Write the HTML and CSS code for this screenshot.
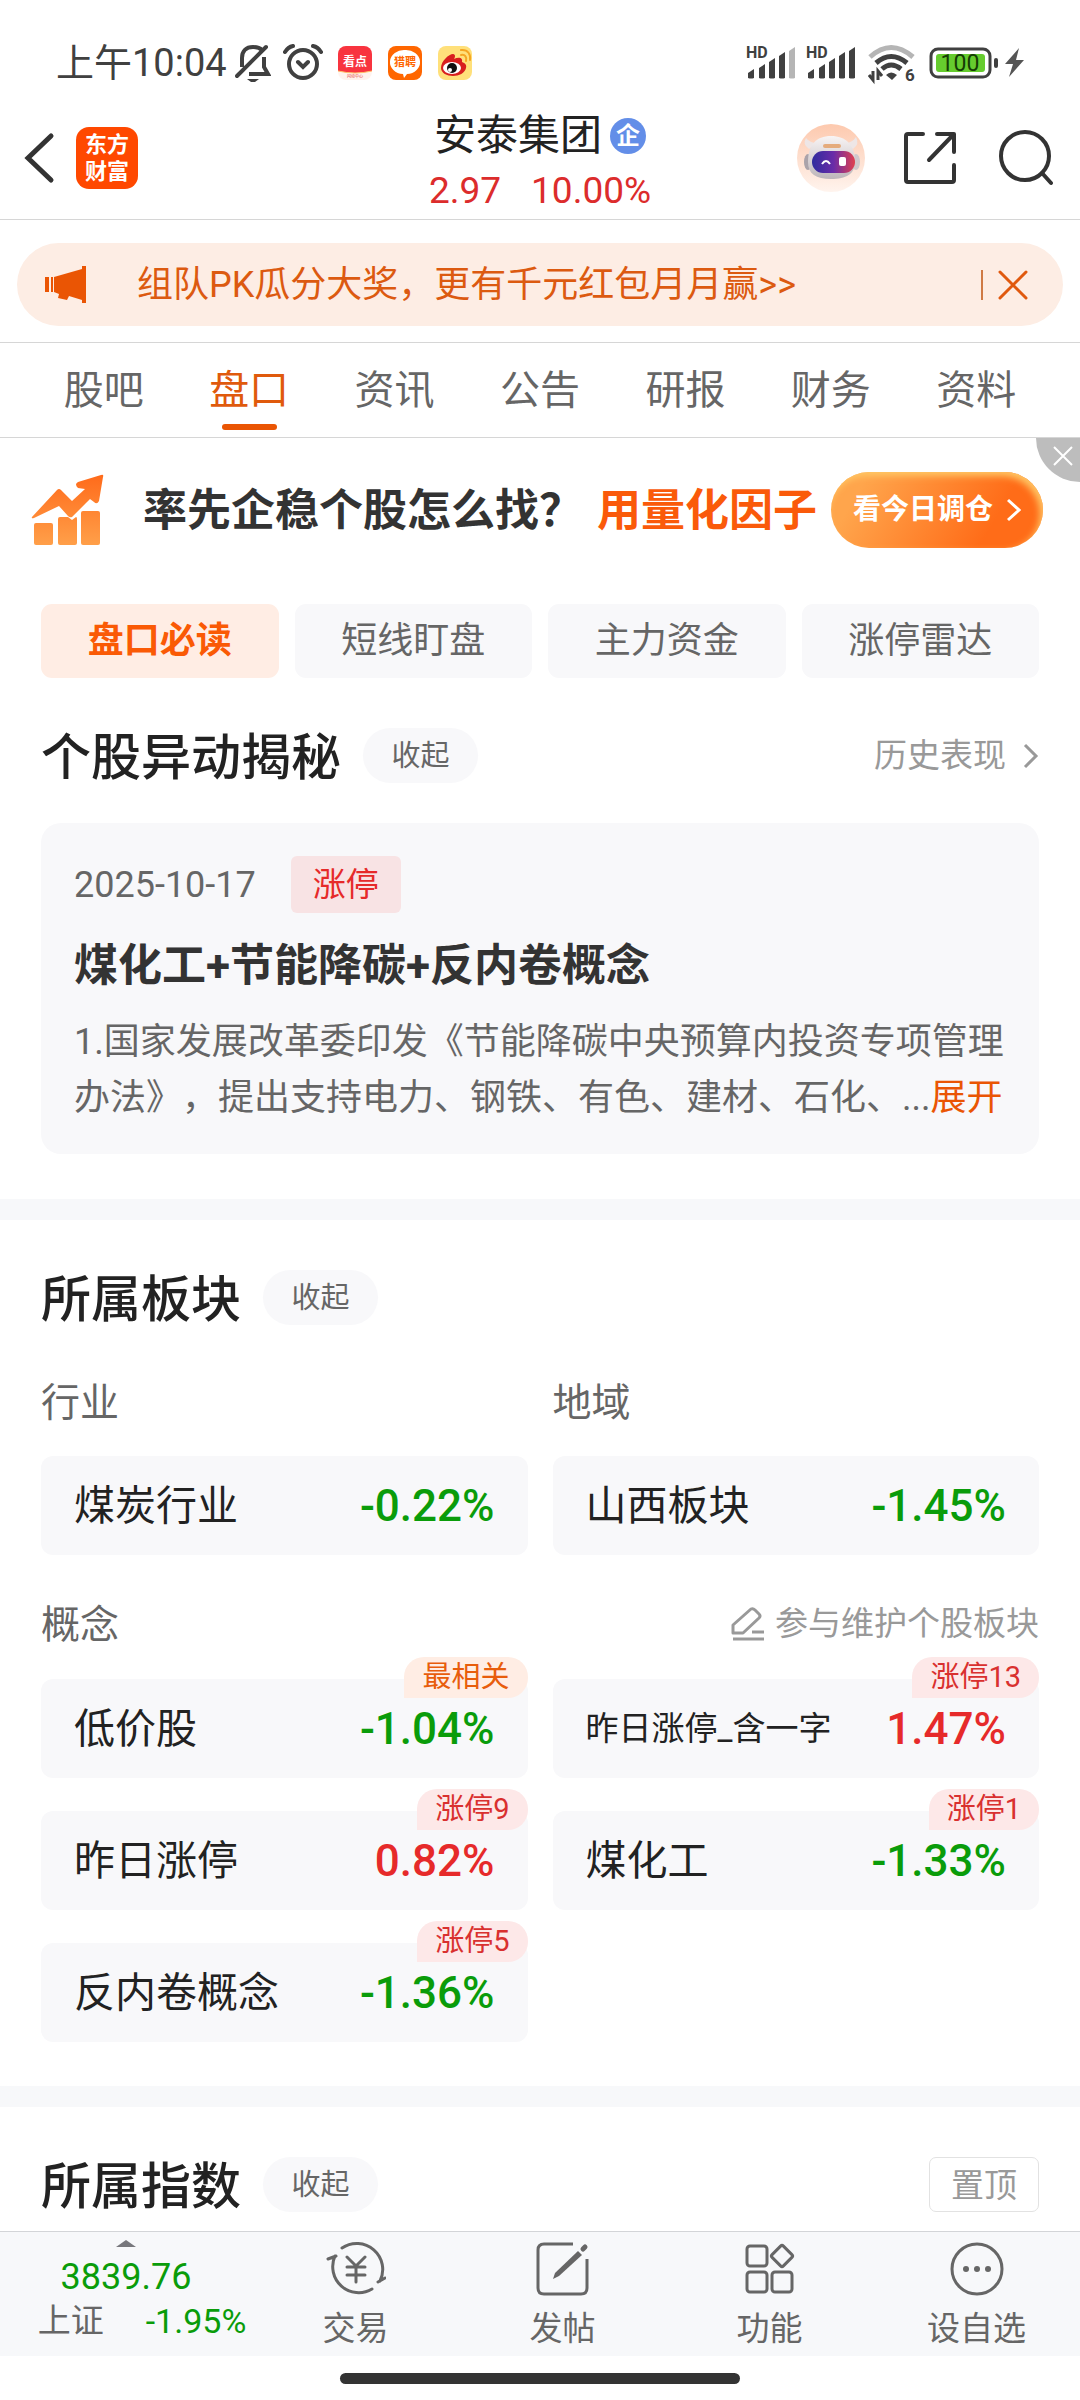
FILE: index.html
```
<!DOCTYPE html>
<html lang="zh-CN">
<head>
    <meta charset="utf-8">
    <meta name="viewport" content="width=device-width">
    <title>安泰集团 - 盘口</title>
<link rel="stylesheet" href="styles.css">
</head>
<body>
<div class="status">
    <span class="time">上午10:04</span>
    <svg class="bell" width="36" height="38" viewBox="0 0 36 38" fill="none" stroke="#404040" stroke-width="4">
        <path d="M7 23V14C7 7 11 3 18 3c4 0 7 1 9 3M29 13v10l4 7H14"/>
        <path d="M2 32L31 3" stroke-linecap="round"/>
        <path d="M12 35h12l-4 3h-4z" fill="#404040" stroke="none"/>
    </svg>
    <svg class="alarm" width="40" height="38" viewBox="0 0 40 38" fill="none" stroke="#404040" stroke-width="4" stroke-linecap="round">
        <circle cx="20" cy="20" r="14"/>
        <path d="M2 8q3-5 8-6M38 8q-3-5-8-6M15 18l5 5 5-5"/>
    </svg>
    <svg class="app" width="34" height="34" viewBox="0 0 34 34">
        <rect width="34" height="34" rx="8" fill="#fff3ee"/>
        <path d="M0 25V8a8 8 0 0 1 8-8h18a8 8 0 0 1 8 8v17q-17 4-34 0z" fill="#f8343f"/>
        <path d="M0 25q17 4 34 0" fill="none" stroke="#ffc46b" stroke-width="1"/>
        <text x="17" y="20" font-size="12" font-weight="700" text-anchor="middle" fill="#fff">看点</text>
        <text x="17" y="32" font-size="4" text-anchor="middle" fill="#e53935">闪动中心</text>
    </svg>
    <svg class="app" width="34" height="34" viewBox="0 0 34 34">
        <rect width="34" height="34" rx="8" fill="#ff6600"/>
        <path d="M17 4a14 12 0 0 1 2 24l-3 4-1-4A14 12 0 0 1 17 4z" fill="#fff"/>
        <text x="17" y="20" font-size="11" font-weight="700" text-anchor="middle" fill="#ff6600">猎聘</text>
    </svg>
    <svg class="app" width="34" height="34" viewBox="0 0 34 34">
        <rect width="34" height="34" rx="8" fill="#ffe07a"/>
        <path d="M3 22c0-7 8-14 12-14 3 0 2 4 1 5 4-2 9-2 8 3 3 1 5 3 4 6-1 5-7 8-13 8S3 27 3 22z" fill="#d81e1e"/>
        <ellipse cx="14" cy="22" rx="9" ry="6" fill="#fff"/>
        <circle cx="14" cy="22" r="5" fill="#111"/>
        <circle cx="12" cy="24" r="2" fill="#fff"/>
        <path d="M23 9c4-1 6 2 5 6M23 4c7-1 10 5 9 10" fill="none" stroke="#f5a623" stroke-width="2" stroke-linecap="round"/>
    </svg>
    <span class="grow"></span>
    <svg width="52" height="44" viewBox="0 -4 52 44" fill="#404040">
        <text x="0" y="13" font-size="16" font-weight="700">HD</text>
        <path d="M2 33v-5l6-4v9q-3 1-6 0zM13 33V23l6-4v14q-3 1-6 0zM23 33V17l6-4v20q-3 1-6 0zM33 33V11l6-4v26q-3 1-6 0z"/>
        <path d="M43 33V6l6-4v31q-3 1-6 0z" fill="#b5b5b5"/>
    </svg>
    <svg class="sig" width="52" height="44" viewBox="0 -4 52 44" fill="#404040">
        <text x="0" y="13" font-size="16" font-weight="700">HD</text>
        <path d="M2 33v-5l6-4v9q-3 1-6 0zM13 33V23l6-4v14q-3 1-6 0zM23 33V17l6-4v20q-3 1-6 0zM33 33V11l6-4v26q-3 1-6 0zM43 33V6l6-4v31q-3 1-6 0z"/>
    </svg>
    <svg class="wifi" width="48" height="46" viewBox="0 -4 48 46" fill="none" stroke="#404040" stroke-width="5">
        <path d="M2 13Q23-6 45 13" stroke="#b5b5b5"/>
        <path d="M8 19q15-13 31 0M14 25q9-8 19 0"/>
        <path d="M18 31q5-5 11 0l-5 5z" fill="#404040" stroke="none"/>
        <path d="M5 27v9l-4-5M10 36v-9l4 5" stroke-width="3"/>
        <text x="37" y="37" font-size="17" font-weight="700" fill="#404040" stroke="none">6</text>
    </svg>
    <svg class="batt" width="96" height="32" viewBox="0 0 96 32">
        <rect x="2" y="2" width="59" height="28" rx="7" fill="#fff" stroke="#404040" stroke-width="3"/>
        <rect x="7" y="7" width="49" height="18" rx="3" fill="#66cc2e"/>
        <rect x="65" y="11" width="4" height="10" rx="2" fill="#404040"/>
        <text x="31" y="24" font-size="23" text-anchor="middle" fill="#153d05">100</text>
        <path d="M90 1L76 17h8l-4 13 15-17h-8z" fill="#555"/>
    </svg>
</div>

<header class="header">
    <a href="#" class="back" aria-label="返回">
        <svg width="32" height="54" viewBox="0 0 32 54" fill="none" stroke="#333" stroke-width="5" stroke-linecap="round"><path d="M27 5L4 27l23 22"/></svg>
    </a>
    <a href="#" class="logo">东方<br>财富</a>
    <div class="stock">
        <h1>安泰集团<span class="qi">企</span></h1>
        <p class="price"><span>2.97</span><span>10.00%</span></p>
    </div>
    <a href="#" class="robot" aria-label="智能助手">
        <svg width="68" height="68" viewBox="0 0 68 68">
            <defs>
                <linearGradient id="bg" x1="0" y1="0" x2="0" y2="1"><stop offset="0" stop-color="#fdc9ae"/><stop offset="1" stop-color="#fff4ee"/></linearGradient>
                <linearGradient id="face" x1="0" y1="0" x2="1" y2="0"><stop offset="0" stop-color="#2f2c9e"/><stop offset="0.5" stop-color="#6a2ca8"/><stop offset="1" stop-color="#e0404f"/></linearGradient>
                <linearGradient id="head" x1="0" y1="0" x2="0" y2="1"><stop offset="0" stop-color="#f8f4f4"/><stop offset="1" stop-color="#bdb6ba"/></linearGradient>
            </defs>
            <circle cx="34" cy="34" r="34" fill="url(#bg)"/>
            <path d="M12 25Q5 20 9 14q4 5 11 5zM56 25q7-5 3-12-4 6-11 6z" fill="#eee6e6"/>
            <ellipse cx="11" cy="38" rx="4" ry="8" fill="#aaa3aa"/>
            <ellipse cx="59" cy="38" rx="4" ry="8" fill="#d0c8cc"/>
            <path d="M11 38c0-17 8-26 23-26s24 9 24 26c0 12-9 17-24 17S11 50 11 38z" fill="url(#head)"/>
            <rect x="26" y="20" width="18" height="4" rx="2" fill="#e5ab7c"/>
            <rect x="15" y="27" width="43" height="22" rx="11" fill="url(#face)"/>
            <path d="M25 40q4-6 8 0" fill="none" stroke="#fff" stroke-width="2"/>
            <rect x="42" y="33" width="7" height="9" rx="2" fill="#fff"/>
        </svg>
    </a>
    <a href="#" class="share" aria-label="分享">
        <svg width="54" height="54" viewBox="0 0 54 54" fill="none" stroke="#333" stroke-width="4" stroke-linecap="round" stroke-linejoin="round"><path d="M20 3H5q-2 0-2 2v44q0 2 2 2h44q2 0 2-2V34M34 3h17v18M50 4L26 29"/></svg>
    </a>
    <a href="#" class="search" aria-label="搜索">
        <svg width="54" height="56" viewBox="0 0 54 56" fill="none" stroke="#333" stroke-width="4" stroke-linecap="round"><circle cx="26" cy="26" r="24"/><path d="M43 43l9 10"/></svg>
    </a>
</header>

<div class="notice-wrap">
    <div class="notice">
        <svg width="42" height="37" viewBox="0 0 42 37" fill="#ea5504"><path d="M0 11h4v15H0zM6 11h2v15H6zM9 11l28-8V0h4v37h-4v-3l-13-4-2 4-9-2 1-4-5-2z"/></svg>
        <a href="#">组队PK瓜分大奖，更有千元红包月月赢&gt;&gt;</a>
        <button aria-label="关闭"><svg width="30" height="30" viewBox="0 0 30 30" fill="none" stroke="#e0590e" stroke-width="3" stroke-linecap="round"><path d="M2 2l26 26M28 2L2 28"/></svg></button>
    </div>
</div>

<nav class="tabs">
    <a href="#">股吧</a>
    <a href="#" class="on">盘口</a>
    <a href="#">资讯</a>
    <a href="#">公告</a>
    <a href="#">研报</a>
    <a href="#">财务</a>
    <a href="#">资料</a>
</nav>

<div class="ad">
    <svg width="74" height="72" viewBox="0 0 74 72">
        <defs><linearGradient id="up" x1="0" y1="0" x2="0" y2="72" gradientUnits="userSpaceOnUse"><stop offset="0" stop-color="#ff6a1a"/><stop offset="1" stop-color="#ffa04a"/></linearGradient></defs>
        <g fill="url(#up)">
            <path d="M1 43L26 16q2-2 4 0l11 11 13-12-7-1q-4-4 0-6L70 1q3-1 2 2l-4 24q-2 4-5 1l-4-3-18 18q-2 1-4-1L28 32 3 44q-3 1-2-1z"/>
            <rect x="3" y="49" width="19" height="22" rx="2"/>
            <path d="M29 43h8l4 3 4-3q1 0 1 2v24q0 2-2 2H29q-2 0-2-2V45q0-2 2-2z"/>
            <rect x="50" y="37" width="19" height="34" rx="2"/>
        </g>
    </svg>
    <p>率先企稳个股怎么找？<em>用量化因子</em></p>
    <a href="#" class="go">看今日调仓<svg width="14" height="24" viewBox="0 0 14 24" fill="none" stroke="#fff" stroke-width="3"><path d="M1 2l11 10L1 22"/></svg></a>
    <button class="ad-close" aria-label="关闭广告"><svg width="20" height="20" viewBox="0 0 20 20" fill="none" stroke="#fff" stroke-width="2"><path d="M1 1l18 18M19 1L1 19"/></svg></button>
</div>

<main>
<section>
    <div class="chips">
        <button class="on">盘口必读</button>
        <button>短线盯盘</button>
        <button>主力资金</button>
        <button>涨停雷达</button>
    </div>
    <div class="head">
        <h2>个股异动揭秘</h2>
        <button class="fold">收起</button>
        <a href="#" class="more">历史表现<svg width="16" height="26" viewBox="0 0 16 26" fill="none" stroke="#999" stroke-width="3"><path d="M2 2l11 11L2 24"/></svg></a>
    </div>
    <article class="card">
        <div class="date"><time datetime="2025-10-17">2025-10-17</time><span>涨停</span></div>
        <h3>煤化工+节能降碳+反内卷概念</h3>
        <p>1.国家发展改革委印发《节能降碳中央预算内投资专项管理<br>办法》，提出支持电力、钢铁、有色、建材、石化、...<a href="#">展开</a></p>
    </article>
</section>

<section class="boards">
    <div class="head">
        <h2>所属板块</h2>
        <button class="fold">收起</button>
    </div>
    <div class="grid labels">
        <h4>行业</h4>
        <h4>地域</h4>
    </div>
    <div class="grid">
        <a href="#" class="box">煤炭行业<b class="down">-0.22%</b></a>
        <a href="#" class="box">山西板块<b class="down">-1.45%</b></a>
    </div>
    <div class="concept">
        <h4>概念</h4>
        <a href="#" class="more"><svg width="34" height="34" viewBox="0 0 34 34" fill="none" stroke="#999" stroke-width="3" stroke-linejoin="round"><path d="M2 26v-8L20 2q2-1 4 1l4 4q2 2 0 4L12 26zM21 25h12M2 32h31"/></svg>参与维护个股板块</a>
    </div>
    <div class="grid">
        <a href="#" class="box">低价股<b class="down">-1.04%</b><i class="hot">最相关</i></a>
        <a href="#" class="box"><small>昨日涨停_含一字</small><b class="up">1.47%</b><i>涨停13</i></a>
        <a href="#" class="box">昨日涨停<b class="up">0.82%</b><i>涨停9</i></a>
        <a href="#" class="box">煤化工<b class="down">-1.33%</b><i>涨停1</i></a>
        <a href="#" class="box">反内卷概念<b class="down">-1.36%</b><i>涨停5</i></a>
    </div>
</section>

<section class="index">
    <div class="head">
        <h2>所属指数</h2>
        <button class="fold">收起</button>
        <button class="pin">置顶</button>
    </div>
</section>
</main>

<footer class="footer">
    <div class="bar">
        <a href="#" class="quote">
            <svg width="20" height="7" viewBox="0 0 20 7"><path d="M0 7l10-7 10 7z" fill="#77777c"/></svg>
            <span class="num">3839.76</span>
            <span class="row"><span>上证</span><span class="down">-1.95%</span></span>
        </a>
        <a href="#">
            <svg width="60" height="56" viewBox="0 0 60 56" fill="none" stroke="#666" stroke-width="3" stroke-linecap="round"><path d="M16 7A26 26 0 0 1 54 40M52 41l7-4M46 48A26 26 0 0 1 9 15M2 18l8-3M21 16l9 9 9-9M21 26h18M21 34h18M30 26v15"/></svg>
            交易
        </a>
        <a href="#">
            <svg width="60" height="56" viewBox="0 0 60 56" fill="none" stroke="#666" stroke-width="3"><path d="M40 3H11q-6 0-6 6v38q0 6 6 6h37q6 0 6-6V18"/><path d="M45 10l4 4-23 21-6 3 2-6z" fill="#666" stroke="none"/><path d="M50 8l2-2" stroke-width="5" stroke-linecap="round"/></svg>
            发帖
        </a>
        <a href="#">
            <svg width="60" height="56" viewBox="0 0 60 56" fill="none" stroke="#666" stroke-width="3" stroke-linejoin="round"><rect x="7" y="5" width="20" height="20" rx="3"/><rect x="7" y="31" width="20" height="20" rx="3"/><rect x="32" y="31" width="20" height="20" rx="3"/><rect x="34" y="7" width="16" height="16" rx="2" transform="rotate(45 42 15)"/></svg>
            功能
        </a>
        <a href="#">
            <svg width="60" height="56" viewBox="0 0 60 56" fill="none" stroke="#666" stroke-width="3"><circle cx="30" cy="28" r="25"/><g fill="#666" stroke="none"><circle cx="19" cy="28" r="3"/><circle cx="30" cy="28" r="3"/><circle cx="41" cy="28" r="3"/></g></svg>
            设自选
        </a>
    </div>
    <div class="home"></div>
</footer>
</body>
</html>
```

FILE: styles.css
```
* {box-sizing: border-box; margin: 0; padding: 0;}
body {
    display: flex; flex-direction: column; min-height: 100vh;
    background: #fff; color: #222;
    font-family: Roboto, "Noto Sans CJK SC", sans-serif; font-size: 36px; line-height: 56px;
    text-spacing-trim: space-all;
}
a {color: inherit; text-decoration: none;}
button {border: 0; background: none; font: inherit; color: inherit; cursor: pointer;}
svg {display: block; flex: none;}
h1, h2, h3, h4, i, em {font-weight: 400; font-style: normal;}

.up {color: #e62a2a;}
.down {color: #0a9c0a;}

/* status bar */
.status {display: flex; align-items: center; height: 96px; padding: 30px 55px 0 56px; color: #404040;}
.time {font-size: 38px; margin-right: 8px;}
.alarm {margin: 0 15px 0 12px;}
.app {margin-right: 16px;}
.grow {flex: 1;}
.sig {margin: 0 10px 0 8px;}
.batt {margin-left: 13px;}

/* title bar */
.header {display: flex; align-items: center; padding: 0 27px 0 24px; border-bottom: 1px solid #d6d6d6;}
.logo {
    width: 62px; height: 62px; margin-left: 20px; padding-top: 4px; border-radius: 13px;
    background: #ff4800; color: #fff; font-size: 22px; line-height: 27px; font-weight: 700; text-align: center;
}
.stock {flex: 1; padding-top: 13px; padding-left: 145px;}
.stock h1 {display: flex; align-items: center; justify-content: center; gap: 8px; font-size: 42px; line-height: 54px;}
.qi {width: 36px; height: 36px; border-radius: 50%; background: #638ee8; color: #fff; font-size: 24px; line-height: 36px; font-weight: 700; text-align: center;}
.price {display: flex; justify-content: center; gap: 30px; font-size: 37px; color: #dc2c2c;}
.share {margin: 0 42px 0 38px;}

/* orange notice */
.notice-wrap {padding: 23px 17px 16px; border-bottom: 1px solid #d6d6d6;}
.notice {display: flex; align-items: center; height: 83px; padding: 0 35px 0 28px; border-radius: 42px; background: #fdede4; color: #dc5a10;}
.notice a {flex: 1; padding-left: 50px;}
.notice button {padding-left: 15px; border-left: 2px solid #cf7a45;}

.tabs {display: flex; padding: 0 31px; border-bottom: 1px solid #d6d6d6;}
.tabs a {flex: 1; position: relative; padding-top: 2px; font-size: 40px; line-height: 92px; text-align: center; color: #666;}
.tabs .on {color: #e05a0c;}
.tabs .on::after {content: ""; position: absolute; left: 50%; bottom: 7px; width: 55px; height: 6px; margin-left: -27px; border-radius: 3px; background: #ea5504;}

/* advert */
.ad {display: flex; align-items: center; position: relative; height: 144px; padding: 0 37px 0 31px; overflow: hidden;}
.ad p {flex: 1; padding: 2px 0 0 38px; font-size: 44px; line-height: 60px; font-weight: 700; color: #333; white-space: nowrap;}
.ad em {margin-left: 14px; font-weight: 700; color: #fa5a0a;}
.go {
    display: flex; align-items: center; justify-content: center; gap: 14px; width: 212px; height: 76px; border-radius: 38px;
    background: linear-gradient(120deg, #ffa54c 15%, #ff6c18 75%); box-shadow: inset -3px 4px 7px #ffc765;
    color: #fff; font-size: 28px; font-weight: 700;
}
.ad-close {position: absolute; right: 0; top: 0; width: 44px; height: 44px; padding: 0 0 8px 17px; border-radius: 0 0 0 44px; background: #bdbdbd;}

section {padding: 50px 41px 45px; border-bottom: 21px solid #f7f8fa;}
section:first-child {padding-top: 22px;}
.chips {display: flex; gap: 16px; margin-bottom: 50px;}
.chips button {flex: 1; height: 74px; border-radius: 11px; background: #f8f8fa; color: #666;}
.chips .on {background: #ffede4; color: #fa5a05; font-weight: 700;}

.head {display: flex; align-items: center; height: 55px;}
.head h2 {padding-top: 4px; font-size: 50px; font-weight: 500;}
.fold {width: 115px; height: 55px; margin-left: 22px; border-radius: 28px; background: #f8f8fa; color: #666; font-size: 29px;}
.more {display: flex; align-items: center; gap: 10px; margin-left: auto; font-size: 33px; color: #999;}
.head .more {gap: 17px;}
.pin {width: 110px; height: 55px; margin-left: auto; border: 1px solid #e2e2e2; border-radius: 7px; color: #999; font-size: 33px;}

.card {margin-top: 40px; padding: 33px 33px 28px; border-radius: 20px; background: #f8f8fa; color: #666;}
.date {display: flex; align-items: center;}
.date span {margin-left: 35px; padding: 0 22px; border-radius: 6px; background: #f8e3e4; color: #e62a2a; font-size: 33px; line-height: 57px;}
.card h3 {margin: 23px 0 18px; font-size: 44px; line-height: 60px; font-weight: 700; color: #333;}
.card p {white-space: nowrap;}
.card p a {color: #ea5504;}

.boards {padding-bottom: 44px;}
.grid {display: grid; grid-template-columns: 1fr 1fr; gap: 33px 25px;}
h4 {padding-top: 2px; font-size: 39px; line-height: 54px; color: #666;}
.labels {margin: 49px 0 26px;}
.box {display: flex; align-items: center; justify-content: space-between; position: relative; height: 99px; padding: 0 33px; border-radius: 12px; background: #f8f8fa; font-size: 41px;}
.box small {font-size: 33px;}
.box b {font-size: 44px; font-weight: 500;}
.box i {position: absolute; right: 0; top: -22px; padding: 0 18px; border-radius: 20px 20px 20px 0; background: #fde8e8; color: #d9302f; font-size: 29px; line-height: 41px;}
.box .hot {background: #ffede4; color: #e85d0c;}
.concept {display: flex; align-items: center; margin: 41px 0 27px;}

.index {padding-bottom: 19px; border: 0;}

/* bottom bar */
.footer {position: sticky; bottom: 0; margin-top: auto; background: #fff;}
.bar {display: flex; height: 125px; border-top: 1px solid #d3d5d8; background: #f7f8fa; color: #666; font-size: 33px; line-height: 44px;}
.bar a {flex: 1; display: flex; flex-direction: column; align-items: center; padding-top: 9px; gap: 10px;}
.bar .quote {flex: 0 0 252px; padding-top: 8px; gap: 0;}
.num {padding-top: 8px; font-size: 36px;}
.quote .num {color: #0a9c0a;}
.row {display: flex; gap: 42px; padding-left: 32px;}
.row .down {font-size: 34px;}
.home {width: 400px; height: 11px; margin: 17px auto 16px; border-radius: 6px; background: #333;}
```
